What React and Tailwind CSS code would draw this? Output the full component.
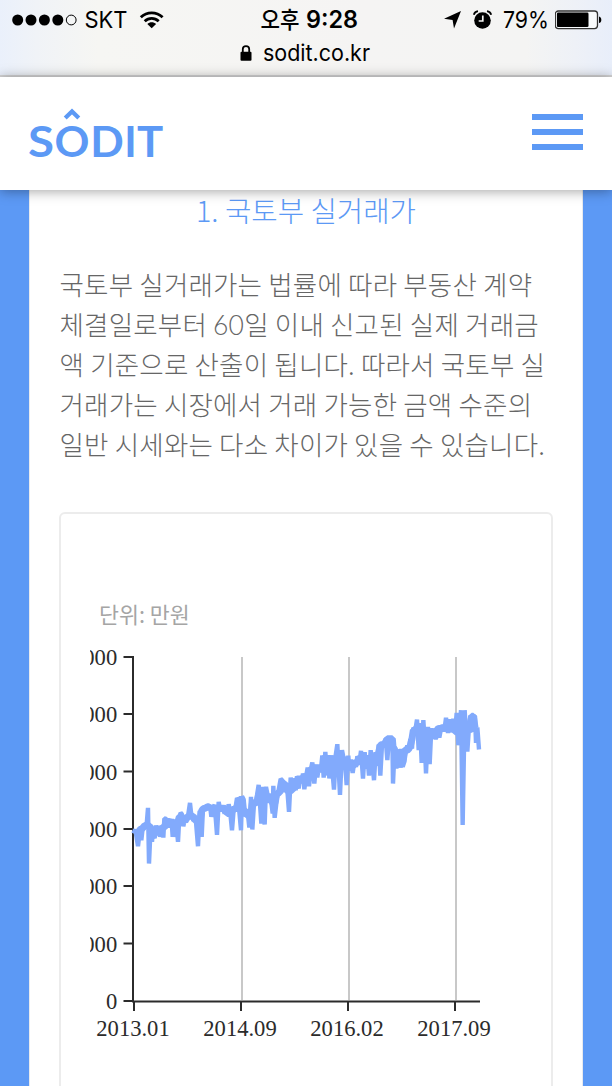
import React from "react";

const LEFT_SERIES =
  "40,280 46,268 54,318 60,266 64,300 68,264 74,256 80,252 84,203 87,370 92,258 96,305 100,262 104,294 108,256 114,284 118,256 120,290 126,262 130,292 133,235 139,236 143,262 148,244 155,244 158,290 162,246 165,290 169,244 174,305 178,230 182,218 186,222 190,258 194,238 198,246 204,228 210,188 214,225 220,240 224,228 228,246 234,318 239,212 245,290 249,204 256,200 262,206 267,200 270,195 274,230 278,205 284,194 291,284 296,185 300,205 308,204 314,220 318,204 322,220 326,192 331,220 336,270 341,208 346,205 351,174 355,178 358,215 363,270 366,168 371,178 376,228 381,212 384,225 388,262 393,170 397,268 402,190 407,188 411,165 416,134 424,250 429,142 434,253 438,140 443,165 448,188 452,170 458,220 460,137 464,233 469,190 474,160 482,116 488,122 494,152 498,130 502,150 507,215 512,112 518,150 522,115 527,150 531,108 536,145";
const RIGHT_SERIES =
  "30,258 34,278 39,250 43,297 48,260 53,232 57,288 62,240 67,217 73,280 78,224 82,262 87,225 92,245 97,196 101,262 106,185 111,255 115,195 118,265 123,196 127,240 132,298 137,196 142,162 150,314 156,180 160,200 166,230 170,285 175,196 178,240 183,208 188,248 193,215 198,230 202,198 208,218 213,182 219,265 224,186 228,235 232,196 237,256 242,180 247,215 252,270 257,186 262,225 266,163 271,256 276,165 281,158 287,146 292,210 297,144 302,146 307,145 309,280 314,170 319,235 324,178 329,232 333,176 338,230 343,215 348,180 352,166 357,180 361,146 366,175 370,112 376,120 381,88 386,180 390,100 395,218 400,90 404,150 408,250 414,110 419,222 424,114 428,145 432,116 437,148 442,110 448,142 453,115 458,105 463,122 468,83 474,128 479,88 485,125 490,86 495,125 500,68 505,165 509,125 513,60 518,404 524,60 528,130 532,184 537,110 541,77 545,125 550,78 555,78 558,158 562,112 567,178";

const scale = (series, ox, oy) =>
  series.split(" ").map((p) => {
    const [x, y] = p.split(",").map(Number);
    return [x / 3 + ox, y / 3 + oy];
  });

const DATA = [...scale(LEFT_SERIES, 30, 100.2), ...scale(RIGHT_SERIES, 200, 50.2)];
const toPoints = (data) => data.map(([x, y]) => `${x.toFixed(2)},${y.toFixed(2)}`).join(" ");
const POINTS = toPoints(DATA);

// Running median: the dense core of the series, without its spikes.
const MEDIAN = toPoints(
  DATA.slice(2, -2).map(([x], i) => {
    const ys = DATA.slice(i, i + 5).map((p) => p[1]).sort((a, b) => a - b);
    return [x, ys[2]];
  })
);

const Y_TICKS = [
  [17, "30,000"],
  [74, "25,000"],
  [131.5, "20,000"],
  [189, "15,000"],
  [246, "10,000"],
  [303.5, "5,000"],
  [361, "0"],
];
const X_TICKS = [
  [44, "2013.01"],
  [151, "2014.09"],
  [258, "2016.02"],
  [365, "2017.09"],
];

function StatusBar() {
  return (
    <div className="h-[77px] shrink-0 border-b-2 border-[#d6d6d7] bg-[linear-gradient(90deg,#eaf0fb_0%,#f0f3f7_6%,#f6f6f3_16%,#f5f4f3_60%,#f4f4f3_86%,#eef1f7_94%,#e8eefa_100%)] font-['Inter','Noto_Sans_CJK_KR',sans-serif] text-black">
      <div className="grid h-10 grid-cols-[1fr_auto_1fr] items-center pr-[9px] pl-3">
        <div className="flex items-center">
          <svg width="66" height="12" viewBox="0 0 66 12">
            <circle cx="5.7" cy="6" r="5.5" />
            <circle cx="19" cy="6" r="5.5" />
            <circle cx="32.4" cy="6" r="5.5" />
            <circle cx="45.8" cy="6" r="5.5" />
            <circle cx="59.2" cy="6" r="4.9" fill="none" stroke="#000" strokeWidth="1" />
          </svg>
          <svg className="ml-1.5 overflow-visible" width="46" height="28" viewBox="0 0 46 28">
            <text x="0.5" y="22.2" fontSize="23.5" textLength="43" lengthAdjust="spacingAndGlyphs">SKT</text>
          </svg>
          <svg className="ml-[9px]" width="26" height="20" viewBox="0 0 26 20">
            <g fill="none" stroke="#000" strokeWidth="2.8">
              <path d="M1.8 7.3C8 1.3 17.4 1.3 23.6 7.3" />
              <path d="M5.7 11.3C9.8 7.4 15.6 7.4 19.7 11.3" />
            </g>
            <path d="M8.3 14C10.8 11.7 14.6 11.7 17.1 14L12.7 18.3Z" />
          </svg>
        </div>
        <svg className="overflow-visible" width="98" height="30" viewBox="0 0 98 30">
          <text x="1.5" y="23.3" fontSize="23" fontWeight="500" textLength="39" lengthAdjust="spacingAndGlyphs">오후</text>
          <text x="47" y="23.3" fontSize="24" fontWeight="600" textLength="52" lengthAdjust="spacingAndGlyphs">9:28</text>
        </svg>
        <div className="flex items-center justify-end">
          <svg width="19" height="20" viewBox="0 0 19 20">
            <path d="M18 1L11 18.5L9.6 10L1 8.8Z" />
          </svg>
          <svg className="ml-[10px]" width="22" height="20" viewBox="0 0 22 20">
            <circle cx="10.5" cy="10.5" r="8.3" />
            <path d="M1.8 4.8C2.4 2.8 4 1.5 6 1.2M19.2 4.8C18.6 2.8 17 1.5 15 1.2" fill="none" stroke="#000" strokeWidth="1.8" />
            <path d="M10.8 5.5V11H6.7" fill="none" stroke="#f5f5f3" strokeWidth="1.7" />
          </svg>
          <svg className="ml-[9px] overflow-visible" width="47" height="28" viewBox="0 0 47 28">
            <text x="0" y="22.2" fontSize="23.5" textLength="46" lengthAdjust="spacingAndGlyphs">79%</text>
          </svg>
          <svg className="ml-[5px]" width="48" height="20" viewBox="0 0 48 20">
            <rect x="0.3" y="1" width="42.2" height="17.6" rx="3" fill="#f8fafc" stroke="#333" strokeWidth="1.3" />
            <rect x="1.9" y="2.6" width="31.6" height="14.4" rx="1.3" />
            <path d="M44 6.5C47.1 7 47.1 12.6 44 13.1Z" />
          </svg>
        </div>
      </div>
      <div className="flex h-[26px] items-center justify-center pr-0.5">
        <svg width="12" height="17" viewBox="0 0 12 17">
          <rect x="0.5" y="6.8" width="11" height="9" rx="1" />
          <path d="M2.8 7.3V4.1C2.8 0.2 9.2 0.2 9.2 4.1V7.3" fill="none" stroke="#000" strokeWidth="1.8" />
        </svg>
        <svg className="ml-[11px] overflow-visible" width="107" height="28" viewBox="0 0 107 28">
          <text x="0" y="21.5" fontSize="22.5" textLength="107" lengthAdjust="spacingAndGlyphs">sodit.co.kr</text>
        </svg>
      </div>
    </div>
  );
}

function Header() {
  return (
    <header className="relative z-10 flex h-[113px] shrink-0 items-center justify-between bg-white pr-[29px] pl-7 shadow-[0_1px_12px_rgba(0,0,0,0.38)]">
      <svg className="overflow-visible" width="136" height="60" viewBox="0 0 136 60">
        <path d="M37.2 14L44 7.4L50.8 14" fill="none" stroke="#5c99f5" strokeWidth="4.2" />
        <g fontSize="42" fill="#5c99f5" fontWeight="700" fontFamily="Lato, sans-serif" transform="translate(0 53.1)">
          <text transform="translate(0 0) scale(1.13 1)">S</text>
          <text transform="translate(26.6 0) scale(1.03 1)">O</text>
          <text transform="translate(62.3 0) scale(1.05 1)">D</text>
          <text transform="translate(96.2 0)">I</text>
          <text transform="translate(109 0) scale(1.04 1)">T</text>
        </g>
      </svg>
      <div className="flex flex-col gap-[9px] pb-[3px]">
        <div className="h-1.5 w-[51px] bg-[#5c99f5]" />
        <div className="h-1.5 w-[51px] bg-[#5c99f5]" />
        <div className="h-1.5 w-[51px] bg-[#5c99f5]" />
      </div>
    </header>
  );
}

function PriceChart() {
  return (
    <svg className="block shrink-0 overflow-hidden" width="430" height="410" viewBox="0 0 430 410">
      <g stroke="#c8c8c8" strokeWidth="2">
        <path d="M152 17V360M259 17V360M366 17V360" />
      </g>
      <g stroke="#2b2b2b" strokeWidth="2" fill="none">
        <path d="M43 16V362M42 361.5H390" />
        {Y_TICKS.map(([y]) => (
          <path key={y} d={`M33.5 ${y}H43`} />
        ))}
        {X_TICKS.map(([x]) => (
          <path key={x} d={`M${x} 362V371`} />
        ))}
      </g>
      <g fill="#2b2b2b" fontSize="22.6" fontFamily="'Liberation Serif', serif">
        {Y_TICKS.map(([y, label]) => (
          <text key={y} x="27.2" y={y + 8.3} textAnchor="end">{label}</text>
        ))}
        {X_TICKS.map(([x, label]) => (
          <text key={x} x={x - 1} y="396" textAnchor="middle">{label}</text>
        ))}
      </g>
      <g fill="none" stroke="#82aafc" strokeLinejoin="bevel">
        <polyline points={MEDIAN} strokeWidth="7" />
        <polyline points={POINTS} strokeWidth="4.4" />
      </g>
    </svg>
  );
}

export default function App() {
  return (
    <div className="flex h-[1086px] w-[612px] flex-col overflow-hidden bg-[#5c99f5]">
      <StatusBar />
      <Header />
      <main className="mx-[29px] flex min-h-0 flex-1 flex-col border-x border-[#e8eaee] bg-white px-[29px] font-['Noto_Sans_CJK_KR',sans-serif]">
        <h1 className="h-10 text-center text-[28.7px] leading-10 font-light whitespace-nowrap text-[#5c99f5]">1. 국토부 실거래가</h1>
        <div className="mt-[34px] mb-[48px] h-[201px] pl-[0.5px] text-[26.5px] leading-10 font-light tracking-[0.2px] whitespace-nowrap text-[#666]">
          <p>국토부 실거래가는 법률에 따라 부동산 계약</p>
          <p className="h-10">
            체결일로부터 <span className="font-['Lato',sans-serif]">60</span>일 이내 신고된 실제 거래금
          </p>
          <p>액 기준으로 산출이 됩니다. 따라서 국토부 실</p>
          <p>거래가는 시장에서 거래 가능한 금액 수준의</p>
          <p>일반 시세와는 다소 차이가 있을 수 있습니다.</p>
        </div>
        <section className="flex h-[620px] shrink-0 flex-col rounded-md border-2 border-[#ececec] pl-[29px]">
          <p className="mt-[84px] h-[42px] pl-[9px] text-[21.7px] leading-8 text-[#a5a5a5]">단위: 만원</p>
          <PriceChart />
        </section>
      </main>
    </div>
  );
}
